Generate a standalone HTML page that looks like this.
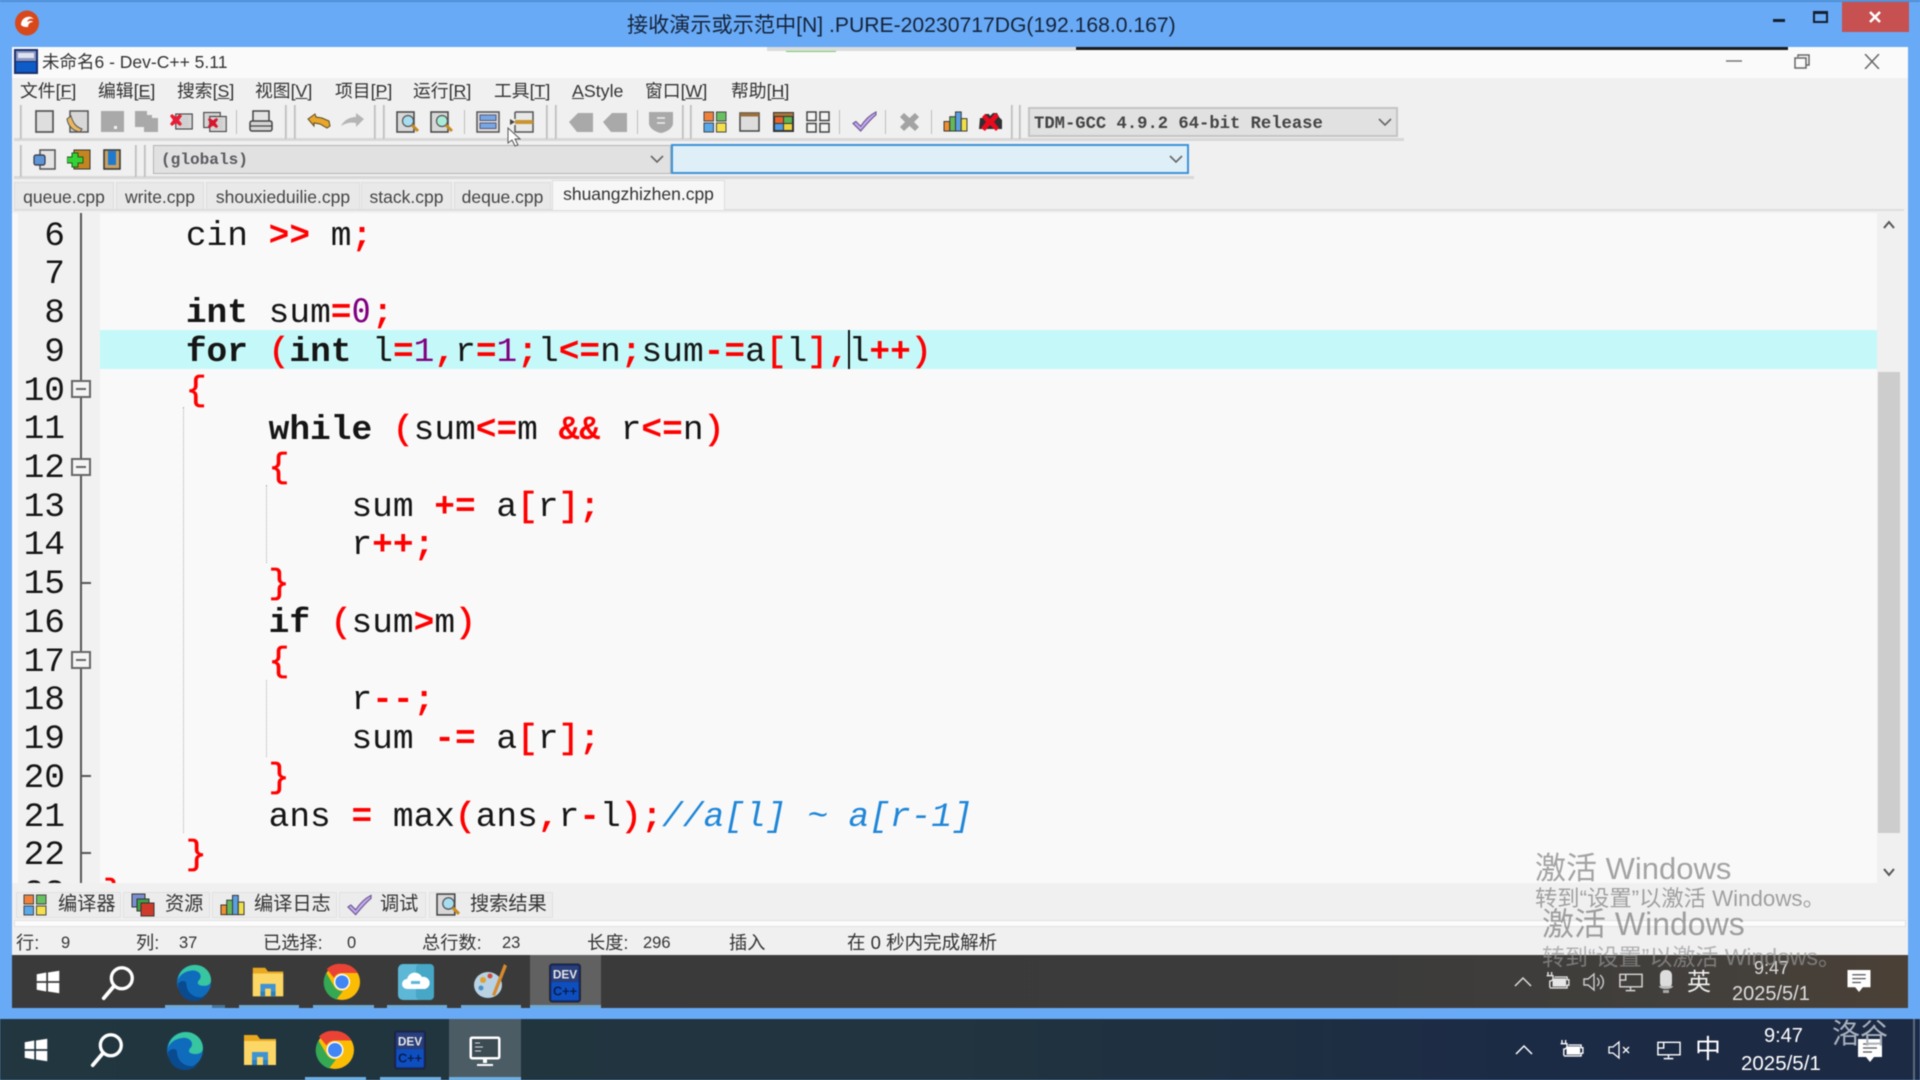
<!DOCTYPE html>
<html lang="zh"><head><meta charset="utf-8"><title>Dev-C++</title>
<style>
*{box-sizing:border-box}
html,body{margin:0;padding:0;background:#68aaf6}
#r{position:relative;width:1920px;height:1080px;overflow:hidden;background:#68aaf6;font-family:"Liberation Sans","Noto Sans CJK SC",sans-serif;color:#222;filter:blur(.45px)}
.a,#r>div,#r>svg,#r>span{position:absolute}
.t{white-space:pre;line-height:1}
.m{font-size:17.800px;top:83px;color:#333}
.sep{width:1px;background:#bdbdbd;top:110px;height:24px}
.h{width:2px;background:#d0d0d0;border-left:1px solid #b8b8b8;top:105px;height:34px}
.h2{top:145px;height:32px}
.tab{top:182px;height:28px;background:#e9e9e9;border:1px solid #ddd;font-size:17.500px;color:#444;text-align:center;line-height:29px;white-space:pre}
#ed{left:12px;top:213px;width:1892px;height:670px;overflow:hidden;background:#f9f9f9}
.l{position:absolute;left:91px;margin-top:3.7px;height:38.73px;font:34.5px/38.73px "Liberation Mono",monospace;color:#151515;white-space:pre}
.n{position:absolute;left:0;width:53px;margin-top:3.7px;text-align:right;height:38.73px;font:34.5px/38.73px "Liberation Mono",monospace;color:#151515}
.l b{font-weight:bold}
.l i{font-style:normal;color:#f00;font-weight:bold}
.l s{text-decoration:none;color:#f00;-webkit-text-stroke:.7px #f00}
.l u{text-decoration:none;color:#800080}
.l em{font-style:italic;color:#1f86d8}
.zero{font-family:"DejaVu Sans Mono",monospace;font-size:32px;line-height:20px;display:inline-block;width:20.7px}
.fb{position:absolute;left:59px;width:20px;height:18px;background:#f4f4f4;border:2px solid #666}
.fb:after{content:"";position:absolute;left:3px;right:3px;top:6px;height:2px;background:#666}
.ft{position:absolute;left:69px;width:10px;height:2px;background:#555}
.bt{top:892px;height:26px;background:#ececec;border:1px solid #e2e2e2;font-size:19.200px;line-height:24px;color:#333;white-space:pre}
.s{top:934px;font-size:16.5px;color:#333;line-height:18px;white-space:pre}
.c{font-size:18.200px}
.w{color:rgba(110,110,110,.62);white-space:pre;line-height:1}
</style></head><body>
<div id="r">
<svg width="0" height="0" style="left:0;top:0">
<defs>
<symbol id="edge" viewBox="0 0 40 40"><circle cx="20" cy="20" r="18" fill="#0f6cbd"/><path d="M3 20C3 8 13 2 21 2c10 0 17 8 17 16 0 3-2 6-7 6-4 0-7-1-7-3 0-3 3-3 3-7 0-4-5-7-10-6C9 9 3 14 3 20z" fill="#37c6a0"/><path d="M12 22c0 9 8 15 16 14 2 0 3-1 5-2-3 4-8 6-13 6C10 40 3 32 3 22c3-4 9-4 9 0z" fill="#0a4a8f"/></symbol>
<symbol id="chrome" viewBox="0 0 40 40"><circle cx="20" cy="20" r="19" fill="#fbbc04"/><path d="M20 1a19 19 0 0 1 16.500 9.500H20a9.500 9.500 0 0 0-8.500 5L4 6.500A19 19 0 0 1 20 1z" fill="#ea4335"/><path d="M3.500 10.500 12 25a9.500 9.500 0 0 0 9 4.500L14 38.500A19 19 0 0 1 3.500 10.500z" fill="#34a853"/><circle cx="20" cy="20" r="8.500" fill="#fff"/><circle cx="20" cy="20" r="7" fill="#4285f4"/></symbol>
<symbol id="folder" viewBox="0 0 40 40"><path d="M4 5h13l3 4h16v26H4z" fill="#eaa820"/><path d="M4 11h32v24H4z" fill="#fcd765"/><path d="M12 30v-8h16v8h-5v-3h-6v3z" fill="#3f93d4"/><path d="M12 35v-5h5v5zM23 35v-5h5v5z" fill="#2d7fc0"/></symbol>
<symbol id="win" viewBox="0 0 30 30"><path d="M2 6l11-2v10H2zM15 4l13-2v12H15zM2 16h11v10L2 24zM15 16h13v12l-13-2z" fill="#fff"/></symbol>
<symbol id="search" viewBox="0 0 40 40"><circle cx="24" cy="15" r="11" fill="none" stroke="#fff" stroke-width="3.500"/><path d="M16 23 5 36" stroke="#fff" stroke-width="4" stroke-linecap="round"/></symbol>
<symbol id="bat" viewBox="0 0 26 22"><path d="M2 0v4M6 0v4M0.500 4h7v3c0 2-2 3-3.500 3v7" fill="none" stroke="#fff" stroke-width="1.500"/><path d="M4 17.500h19v-3h2v-6h-2v-3H9" fill="none" stroke="#fff" stroke-width="1.500"/><rect x="7" y="7" width="15" height="9" fill="#fff"/></symbol>
<symbol id="net" viewBox="0 0 26 20"><path d="M8 2h17v13H2V2h6v6H2M13 15v3M8 19h10" fill="none" stroke="#fff" stroke-width="1.500"/></symbol>
<symbol id="act" viewBox="0 0 24 24"><path d="M0 0h24v18h-8l-4 5-4-5H0z" fill="#fff"/><path d="M5 5h14M5 9h14M5 13h9" stroke="#555" stroke-width="1.300"/></symbol>
<symbol id="grid" viewBox="0 0 24 22"><rect x="1" y="1" width="9.500" height="9" fill="#f0813c" stroke="#444"/><rect x="13.500" y="1" width="9.500" height="9" fill="#68c060" stroke="#444"/><rect x="1" y="12" width="9.500" height="9" fill="#58a8ec" stroke="#444"/><rect x="13.500" y="12" width="9.500" height="9" fill="#f3e04a" stroke="#444"/></symbol>
<symbol id="check" viewBox="0 0 26 22"><path d="M1 13l3-2 5 5C13 10 19 4 25 1l0 3C19 9 14 15 9 21z" fill="#c4a8ee" stroke="#6a5790" stroke-width="1.200"/></symbol>
<symbol id="bars" viewBox="0 0 26 22"><rect x="1" y="11" width="6" height="10" fill="#ef8f30" stroke="#333"/><rect x="7" y="6" width="6" height="15" fill="#64b85a" stroke="#333"/><rect x="13" y="1" width="6" height="20" fill="#5a9fe0" stroke="#333"/><rect x="19" y="8" width="6" height="13" fill="#efe04a" stroke="#333"/></symbol>
<symbol id="doc" viewBox="0 0 24 22"><rect x="1" y="1" width="22" height="20" fill="#d6d6d6" stroke="#444" stroke-width="1.500"/><path d="M6 5h4M13 5h5M6 8h12M6 11h12M6 14h12M6 17h12" stroke="#aaa" stroke-width=".8" stroke-dasharray="1.500 1"/></symbol>
<symbol id="find" viewBox="0 0 24 22"><rect x="1" y="1" width="17" height="20" fill="#d8d8d8" stroke="#444" stroke-width="1.500"/><circle cx="12" cy="10" r="5.500" fill="#a8dcf0" stroke="#555" stroke-width="1.200"/><path d="M16 14l6 6" stroke="#c88a20" stroke-width="3"/></symbol>
<symbol id="find2" viewBox="0 0 24 22"><rect x="1" y="1" width="17" height="20" fill="#d8d8d8" stroke="#444" stroke-width="1.500"/><circle cx="12" cy="10" r="5.500" fill="#a8ecd8" stroke="#555" stroke-width="1.200"/><path d="M16 14l6 6" stroke="#c88a20" stroke-width="3"/></symbol>
<symbol id="dev" viewBox="0 0 36 44"><rect x="1" y="1" width="34" height="42" rx="3" fill="#12296e" stroke="#222"/><rect x="3" y="3" width="30" height="18" fill="#2a3e78"/><rect x="3" y="21" width="30" height="20" fill="#0e4fc0"/><text x="18" y="17" font-family="Liberation Sans" font-weight="bold" font-size="13" fill="#e8e8e8" text-anchor="middle">DEV</text><text x="18" y="36" font-family="Liberation Sans" font-weight="bold" font-size="14" fill="#0b1e50" text-anchor="middle">C++</text></symbol>
</defs></svg>

<!-- outer frame -->
<div style="left:0;top:0;width:1920px;height:2px;background:#4f8fd6"></div>
<svg style="left:13px;top:10px" width="28" height="26" viewBox="0 0 28 26"><ellipse cx="14" cy="13" rx="12" ry="12.500" fill="#d9481a"/><path d="M8 15c0-6 5-9 10-8l3 2c-4-1-6 0-7 3 3-2 6-1 6 0-3 0-5 2-5 5-3 0-5 0-7-2z" fill="#fff"/></svg>
<div class="t" style="left:627px;top:14px;font-size:21.150px;color:#15233a;line-height:24px">接收演示或示范中[N] .PURE-20230717DG(192.168.0.167)</div>
<div style="left:1773px;top:19px;width:12px;height:3px;background:#14202f"></div>
<div style="left:1813px;top:11px;width:15px;height:12px;border:2px solid #14202f;border-top-width:3px"></div>
<div style="left:1842px;top:2px;width:67px;height:30px;background:#c75050"></div>
<svg style="left:1868px;top:11px" width="14" height="12" viewBox="0 0 14 12"><path d="M2 1l10 10M12 1 2 11" stroke="#fff" stroke-width="2.600"/></svg>

<!-- client -->
<div style="left:12px;top:47px;width:1896px;height:908px;background:#f0f0f0"></div>
<div style="left:12px;top:47px;width:1896px;height:31px;background:#fafafa"></div>
<div style="left:767px;top:47px;width:309px;height:4px;background:#dcdcdc"></div>
<div style="left:786px;top:51px;width:50px;height:1px;background:#6fcf6f"></div>
<div style="left:1076px;top:47px;width:712px;height:3px;background:#1a1a1a"></div>
<svg style="left:14px;top:49px" width="24" height="25" viewBox="0 0 24 25"><rect width="24" height="25" fill="#1a2f6c"/><rect x="2" y="2" width="20" height="10" fill="#8a97c4"/><rect x="2" y="13" width="20" height="10" fill="#0e5cc8"/><rect x="4" y="4" width="16" height="5" fill="#dfe3ef"/></svg>
<div class="t" style="left:42px;top:52px;font-size:17.500px;line-height:20px;color:#333">未命名6 - Dev-C++ 5.11</div>
<svg style="left:1726px;top:55px" width="16" height="12"><path d="M0 6h16" stroke="#777" stroke-width="1.500"/></svg>
<svg style="left:1794px;top:54px" width="16" height="15" viewBox="0 0 16 15"><path d="M4 3V1h11v10h-3M1 4h11v10H1z" fill="none" stroke="#666" stroke-width="1.500"/></svg>
<svg style="left:1864px;top:54px" width="16" height="15" viewBox="0 0 16 15"><path d="M1 0l14 15M15 0 1 15" stroke="#666" stroke-width="1.500"/></svg>

<!-- menu -->
<span class="t m" style="left:20px">文件[<u>F</u>]</span>
<span class="t m" style="left:98px">编辑[<u>E</u>]</span>
<span class="t m" style="left:177px">搜索[<u>S</u>]</span>
<span class="t m" style="left:255px">视图[<u>V</u>]</span>
<span class="t m" style="left:335px">项目[<u>P</u>]</span>
<span class="t m" style="left:413px">运行[<u>R</u>]</span>
<span class="t m" style="left:494px">工具[<u>T</u>]</span>
<span class="t m" style="left:572px"><u>A</u>Style</span>
<span class="t m" style="left:645px">窗口[<u>W</u>]</span>
<span class="t m" style="left:731px">帮助[<u>H</u>]</span>

<!-- toolbars -->
<div style="left:14px;top:138px;width:1390px;height:3px;background:#d8d8d8"></div>
<div style="left:14px;top:176px;width:1180px;height:3px;background:#d8d8d8"></div>
<div class="h" style="left:20px"></div><div class="h" style="left:285px"></div><div class="h" style="left:294px"></div><div class="h" style="left:374px"></div><div class="h" style="left:383px"></div><div class="h" style="left:546px"></div><div class="h" style="left:555px"></div><div class="h" style="left:682px"></div><div class="h" style="left:690px"></div><div class="h" style="left:1011px"></div><div class="h" style="left:1019px"></div>
<div class="h h2" style="left:20px"></div><div class="h h2" style="left:135px"></div><div class="h h2" style="left:144px"></div>
<div class="sep" style="left:236px"></div><div class="sep" style="left:464px"></div><div class="sep" style="left:637px"></div><div class="sep" style="left:839px"></div><div class="sep" style="left:885px"></div><div class="sep" style="left:931px"></div>

<svg style="left:35px;top:110px" width="19" height="23" viewBox="0 0 19 23"><rect x="1" y="1" width="17" height="21" fill="#dedede" stroke="#555" stroke-width="1.700"/></svg>
<svg style="left:66px;top:110px" width="23" height="23" viewBox="0 0 23 23"><rect x="4" y="1" width="18" height="21" fill="#d8d8d8" stroke="#555" stroke-width="1.500"/><path d="M1 9c1 7 6 12 13 13l2-3C10 17 7 13 5 6z" fill="#e8b860" stroke="#555"/></svg>
<svg style="left:101px;top:111px" width="23" height="21" viewBox="0 0 23 21"><rect width="23" height="21" fill="#a9a9a9"/><rect x="13" y="15" width="3" height="3" fill="#f4f4f4"/></svg>
<svg style="left:135px;top:111px" width="23" height="21" viewBox="0 0 23 21"><path d="M0 0h12v4h5v3h6v14H9v-5H0z" fill="#a9a9a9"/></svg>
<svg style="left:175px;top:111px" width="18" height="21"><use href="#doc"/></svg>
<svg style="left:169px;top:113px" width="14" height="14" viewBox="0 0 14 14"><path d="M1 3l2-2 4 3 4-3 2 2-3 4 3 4-2 2-4-3-4 3-2-2 3-4z" fill="#ea1b35"/></svg>
<svg style="left:203px;top:111px" width="18" height="18"><use href="#doc"/></svg>
<svg style="left:209px;top:115px" width="18" height="18"><use href="#doc"/></svg>
<svg style="left:207px;top:117px" width="12" height="12" viewBox="0 0 14 14"><path d="M1 3l2-2 4 3 4-3 2 2-3 4 3 4-2 2-4-3-4 3-2-2 3-4z" fill="#d9152e"/></svg>
<svg style="left:249px;top:110px" width="24" height="23" viewBox="0 0 24 23"><rect x="4" y="1" width="16" height="11" fill="#e4e4e4" stroke="#444" stroke-width="1.500"/><rect x="1" y="11" width="22" height="10" rx="2" fill="#d4d4d4" stroke="#444" stroke-width="1.500"/><path d="M1 16h22" stroke="#444" stroke-width="1.300"/></svg>
<svg style="left:307px;top:113px" width="24" height="16" viewBox="0 0 24 16"><path d="M1 6 8 1l1 3 6 1 7 3 1 5-3 2-7-4-6-1v3z" fill="#e8a62c" stroke="#5a4a20" stroke-width="1"/></svg>
<svg style="left:341px;top:113px" width="24" height="15" viewBox="0 0 24 15"><path d="M23 6 15 0v4C9 4 3 7 0 13c5-3 9-4 15-3v4z" fill="#b5b5b5"/></svg>
<svg style="left:396px;top:111px" width="24" height="22"><use href="#find"/></svg>
<svg style="left:430px;top:111px" width="24" height="22"><use href="#find2"/></svg>
<svg style="left:476px;top:111px" width="24" height="22" viewBox="0 0 24 22"><rect x="1" y="1" width="22" height="20" fill="#ddd" stroke="#555" stroke-width="1.500"/><rect x="4" y="4" width="16" height="5.500" fill="#78a8e4" stroke="#557"/><rect x="4" y="12" width="16" height="5.500" fill="#78a8e4" stroke="#557"/></svg>
<svg style="left:510px;top:111px" width="24" height="22" viewBox="0 0 24 22"><path d="M5 1h18v20H5v-7M5 8V1" fill="#e8e8e8" stroke="#555" stroke-width="1.500"/><rect x="5" y="9" width="18" height="4" fill="#c89530"/><path d="M0 8l5 3-5 3z" fill="#444"/></svg>
<svg style="left:569px;top:111px" width="24" height="21" viewBox="0 0 24 21"><path d="M0 11 9 2h15v19H8z" fill="#a9a9a9"/></svg>
<svg style="left:603px;top:111px" width="24" height="21" viewBox="0 0 24 21"><path d="M0 11 9 2h15v19H8z" fill="#a9a9a9"/></svg>
<svg style="left:649px;top:111px" width="24" height="22" viewBox="0 0 24 22"><path d="M0 1h24v11c0 5-6 9-12 10C6 21 0 17 0 12z" fill="#a9a9a9"/><path d="M8 7h8M8 12h8" stroke="#eee" stroke-width="1.500"/></svg>
<svg style="left:703px;top:111px" width="24" height="22"><use href="#grid"/></svg>
<svg style="left:739px;top:112px" width="21" height="20" viewBox="0 0 21 20"><rect x="1" y="1" width="19" height="18" fill="#ddd" stroke="#444" stroke-width="1.500"/><rect x="1" y="1" width="19" height="3.500" fill="#9a6f3a"/></svg>
<svg style="left:773px;top:112px" width="21" height="20" viewBox="0 0 21 20"><rect x="0" y="0" width="21" height="20" fill="#333"/><rect x="1" y="1" width="19" height="3" fill="#a9743a"/><rect x="2" y="5" width="8" height="6" fill="#e9622b"/><rect x="11" y="5" width="8" height="6" fill="#5db350"/><rect x="2" y="12" width="8" height="6" fill="#4e9be3"/><rect x="11" y="12" width="8" height="6" fill="#edd23f"/></svg>
<svg style="left:806px;top:111px" width="24" height="22" viewBox="0 0 24 22"><g fill="#f4f4f4" stroke="#444" stroke-width="1.500"><rect x="1" y="1" width="9" height="8.500"/><rect x="14" y="1" width="9" height="8.500"/><rect x="1" y="12.500" width="9" height="8.500"/><rect x="14" y="12.500" width="9" height="8.500"/></g></svg>
<svg style="left:852px;top:111px" width="25" height="21"><use href="#check"/></svg>
<svg style="left:899px;top:112px" width="21" height="20" viewBox="0 0 21 20"><path d="M1 5l4-4 5.500 5L16 1l4 4-5 5 5 5-4 4-5.500-5L5 19l-4-4 5-5z" fill="#a3a3a3"/></svg>
<svg style="left:943px;top:111px" width="25" height="21"><use href="#bars"/></svg>
<svg style="left:978px;top:111px" width="25" height="21" viewBox="0 0 25 21"><path d="M2 7h5V3h4l1 2 3-3h4l2 4 3 3v9H1z" fill="#2f2f2f"/><path d="M4 6l3-3 5 5 5-6 4 3-5 6 5 6-3 3-6-6-5 6-4-3 5-6z" fill="#ec0a1e"/></svg>

<svg style="left:33px;top:149px" width="23" height="21" viewBox="0 0 23 21"><rect x="7" y="1" width="15" height="19" fill="#e4e4e4" stroke="#555" stroke-width="1.500"/><rect x="1" y="6" width="11" height="10" rx="2" fill="#5c95d8" stroke="#334" stroke-width="1.200"/></svg>
<svg style="left:67px;top:149px" width="24" height="21" viewBox="0 0 24 21"><rect x="7" y="1" width="16" height="19" fill="#c4851e" stroke="#333"/><path d="M5 4h6v4h5v6h-5v4H5v-4H0V8h5z" fill="#35d235" stroke="#1d5a1d"/></svg>
<svg style="left:103px;top:149px" width="18" height="21" viewBox="0 0 18 21"><rect x="1" y="1" width="16" height="19" fill="#c9a162" stroke="#333" stroke-width="1.500"/><rect x="5" y="2" width="8" height="14" fill="#1e7ad0"/></svg>

<!-- combos -->
<div style="left:153px;top:145px;width:518px;height:29px;background:#e1e1e1;border:1px solid #b5b5b5"></div>
<div class="t" style="left:161px;top:152px;font:16.100px/17px 'Liberation Mono',monospace;color:#5a5a60;font-weight:bold">(globals)</div>
<svg style="left:650px;top:154px" width="14" height="10"><path d="M1 2l6 6 6-6" fill="none" stroke="#666" stroke-width="1.600"/></svg>
<div style="left:671px;top:144px;width:518px;height:30px;background:#deeff8;border:2px solid #3d92d8"></div>
<svg style="left:1169px;top:154px" width="14" height="10"><path d="M1 2l6 6 6-6" fill="none" stroke="#666" stroke-width="1.600"/></svg>
<div style="left:1028px;top:107px;width:370px;height:30px;background:#e1e1e1;border:2px solid #c4c4c4"></div>
<div class="t" style="left:1034px;top:116px;font:17.200px/18px 'Liberation Mono',monospace;color:#444;font-weight:bold">TDM-GCC 4.9.2 64-bit Release</div>
<svg style="left:1378px;top:117px" width="14" height="10"><path d="M1 2l6 6 6-6" fill="none" stroke="#666" stroke-width="1.600"/></svg>

<!-- tabs -->
<div style="left:14px;top:209px;width:1890px;height:2px;background:#dedede"></div>
<div class="tab" style="left:14px;width:100px">queue.cpp</div>
<div class="tab" style="left:116px;width:88px">write.cpp</div>
<div class="tab" style="left:206px;width:154px">shouxieduilie.cpp</div>
<div class="tab" style="left:361px;width:91px">stack.cpp</div>
<div class="tab" style="left:454px;width:97px">deque.cpp</div>
<div class="tab" style="left:552px;width:173px;top:180px;height:31px;background:#f7f7f7;line-height:26px;color:#333">shuangzhizhen.cpp</div>

<!-- editor -->
<div id="ed">
<div style="position:absolute;left:6px;top:0;width:82px;height:670px;background:#f1f1f1"></div>
<div style="position:absolute;left:1865px;top:0;width:27px;height:670px;background:#f0f0f0"></div>
<div style="position:absolute;left:1866px;top:159px;width:22px;height:461px;background:#cdcdcd"></div>
<svg style="position:absolute;left:1871px;top:7px" width="12" height="10"><path d="M1 8l5-6 5 6" fill="none" stroke="#555" stroke-width="2"/></svg>
<svg style="position:absolute;left:1871px;top:654px" width="12" height="10"><path d="M1 2l5 6 5-6" fill="none" stroke="#555" stroke-width="2"/></svg>
<div style="position:absolute;left:68px;top:0;width:2px;height:670px;background:#555"></div>
<div style="position:absolute;left:88px;top:117px;width:1777px;height:39px;background:#c5f9f9"></div>
<div style="position:absolute;left:171px;top:194px;height:426px;border-left:1px dotted #aaa"></div>
<div style="position:absolute;left:254px;top:272px;height:78px;border-left:1px dotted #aaa"></div>
<div style="position:absolute;left:254px;top:467px;height:77px;border-left:1px dotted #aaa"></div>
<div class="fb" style="top:167px"></div><div class="fb" style="top:245px"></div><div class="fb" style="top:438px"></div>
<div class="ft" style="top:369px"></div><div class="ft" style="top:562px"></div><div class="ft" style="top:639px"></div>

<div class="n" style="top:1px">6</div><div class="l" style="top:1px">    cin <i>&gt;&gt;</i> m<i>;</i></div>
<div class="n" style="top:39.700px">7</div>
<div class="n" style="top:78.500px">8</div><div class="l" style="top:78.500px">    <b>int</b> sum<i>=</i><u class="zero">0</u><i>;</i></div>
<div class="n" style="top:117.200px">9</div><div class="l" style="top:117.200px">    <b>for</b> <s>(</s><b>int</b> l<i>=</i><u>1</u><i>,</i>r<i>=</i><u>1</u><i>;</i>l<i>&lt;=</i>n<i>;</i>sum<i>-=</i>a<s>[</s>l<s>]</s><i>,</i>l<i>++</i><s>)</s></div>
<div style="position:absolute;left:836px;top:117px;width:2px;height:39px;background:#111"></div>
<div class="n" style="top:155.900px">10</div><div class="l" style="top:155.900px">    <s>{</s></div>
<div class="n" style="top:194.700px">11</div><div class="l" style="top:195.500px">        <b>while</b> <s>(</s>sum<i>&lt;=</i>m <i>&amp;&amp;</i> r<i>&lt;=</i>n<s>)</s></div>
<div class="n" style="top:233.400px">12</div><div class="l" style="top:233.400px">        <s>{</s></div>
<div class="n" style="top:272.100px">13</div><div class="l" style="top:272.100px">            sum <i>+=</i> a<s>[</s>r<s>]</s><i>;</i></div>
<div class="n" style="top:310.800px">14</div><div class="l" style="top:310.800px">            r<i>++;</i></div>
<div class="n" style="top:349.600px">15</div><div class="l" style="top:349.600px">        <s>}</s></div>
<div class="n" style="top:388.300px">16</div><div class="l" style="top:388.300px">        <b>if</b> <s>(</s>sum<i>&gt;</i>m<s>)</s></div>
<div class="n" style="top:427px">17</div><div class="l" style="top:427px">        <s>{</s></div>
<div class="n" style="top:465.800px">18</div><div class="l" style="top:465.800px">            r<i>--;</i></div>
<div class="n" style="top:504.500px">19</div><div class="l" style="top:504.500px">            sum <i>-=</i> a<s>[</s>r<s>]</s><i>;</i></div>
<div class="n" style="top:543.200px">20</div><div class="l" style="top:543.200px">        <s>}</s></div>
<div class="n" style="top:582px">21</div><div class="l" style="top:582px">        ans <i>=</i> max<s>(</s>ans<i>,</i>r<i>-</i>l<s>)</s><i>;</i><em>//a[l] ~ a[r-1]</em></div>
<div class="n" style="top:620.700px">22</div><div class="l" style="top:620.700px">    <s>}</s></div>
<div class="n" style="top:659.400px">23</div><div class="l" style="top:659.400px"><s>}</s></div>
</div>

<!-- bottom tabs -->
<div class="bt" style="left:16px;width:105px;padding-left:41px">编译器</div>
<div class="bt" style="left:123px;width:87px;padding-left:41px">资源</div>
<div class="bt" style="left:212px;width:125px;padding-left:41px">编译日志</div>
<div class="bt" style="left:339px;width:87px;padding-left:40px">调试</div>
<div class="bt" style="left:429px;width:124px;padding-left:40px">搜索结果</div>
<svg style="left:23px;top:894px" width="24" height="22"><use href="#grid"/></svg>
<svg style="left:131px;top:893px" width="24" height="24" viewBox="0 0 24 24"><rect x="1" y="1" width="13" height="13" fill="#7a8fd0" stroke="#333"/><rect x="6" y="6" width="12" height="12" fill="#3fa04a" stroke="#333"/><rect x="10" y="10" width="13" height="13" fill="#d03a2a" stroke="#333"/></svg>
<svg style="left:220px;top:894px" width="25" height="22"><use href="#bars"/></svg>
<svg style="left:347px;top:894px" width="25" height="22"><use href="#check"/></svg>
<svg style="left:436px;top:893px" width="25" height="23"><use href="#find"/></svg>
<div style="left:14px;top:920px;width:1892px;height:7px;background:#fcfcfc;border:1px solid #e2e2e2"></div>

<!-- status -->
<span class="s c" style="left:16px">行:</span><span class="s" style="left:61px">9</span>
<span class="s c" style="left:136px">列:</span><span class="s" style="left:179px">37</span>
<span class="s c" style="left:263px">已选择:</span><span class="s" style="left:347px">0</span>
<span class="s c" style="left:422px">总行数:</span><span class="s" style="left:502px">23</span>
<span class="s c" style="left:587px">长度:</span><span class="s" style="left:643px">296</span>
<span class="s c" style="left:729px">插入</span>
<span class="s c" style="left:847px;font-size:18.500px">在 0 秒内完成解析</span>

<!-- inner taskbar -->
<div style="left:12px;top:955px;width:1896px;height:53px;background:linear-gradient(90deg,#3a3a3a,#3b3b3b 70%,#43403c 90%,#4b4036)"></div>
<div style="left:530px;top:955px;width:71px;height:53px;background:#616161"></div>
<div style="left:165px;top:1005px;width:47px;height:3px;background:#6fa9d6"></div><div style="left:212px;top:1005px;width:13px;height:3px;background:#4b7595"></div>
<div style="left:239px;top:1005px;width:60px;height:3px;background:#6fa9d6"></div><div style="left:313px;top:1005px;width:61px;height:3px;background:#6fa9d6"></div><div style="left:387px;top:1005px;width:60px;height:3px;background:#6fa9d6"></div><div style="left:461px;top:1005px;width:60px;height:3px;background:#6fa9d6"></div><div style="left:530px;top:1005px;width:71px;height:3px;background:#6fa9d6"></div>
<svg style="left:35px;top:969px" width="26" height="26"><use href="#win"/></svg>
<svg style="left:99px;top:964px" width="38" height="38"><use href="#search"/></svg>
<svg style="left:175px;top:963px" width="38" height="38"><use href="#edge"/></svg>
<svg style="left:249px;top:963px" width="38" height="38"><use href="#folder"/></svg>
<svg style="left:323px;top:963px" width="38" height="38"><use href="#chrome"/></svg>
<svg style="left:398px;top:964px" width="36" height="36" viewBox="0 0 36 36"><rect width="36" height="36" rx="5" fill="#5cb8d6"/><rect x="18" width="18" height="36" rx="4" fill="#46a7c6"/><path d="M9 25a5 5 0 0 1 0-10 8 8 0 0 1 15-2 6 6 0 0 1 3 12z" fill="#fff"/><rect x="13" y="17" width="9" height="3" fill="#5cb8d6"/></svg>
<svg style="left:473px;top:962px" width="36" height="40" viewBox="0 0 36 40"><ellipse cx="15" cy="23" rx="14" ry="13" fill="#b9d2e4"/><circle cx="10" cy="18" r="3" fill="#e0a030"/><circle cx="17" cy="14" r="2.500" fill="#d04a3a"/><circle cx="8" cy="26" r="2.500" fill="#4a90c8"/><path d="M31 2l3 2-12 30-3-1z" fill="#d68a2c"/></svg>
<svg style="left:547px;top:963px" width="36" height="40"><use href="#dev"/></svg>

<!-- inner tray -->
<svg style="left:1514px;top:976px" width="18" height="11"><path d="M1 10 9 2l8 8" fill="none" stroke="#ddd" stroke-width="1.500"/></svg>
<svg style="left:1546px;top:972px" width="24" height="20" opacity=".88"><use href="#bat"/></svg>
<svg style="left:1583px;top:972px" width="23" height="20" viewBox="0 0 23 20"><path d="M1 7h4l6-5v16l-6-5H1zM14 6a5 5 0 0 1 0 8M17 3a9 9 0 0 1 0 14" fill="none" stroke="#ccc" stroke-width="1.400"/></svg>
<svg style="left:1618px;top:972px" width="25" height="20" opacity=".8"><use href="#net"/></svg>
<svg style="left:1658px;top:970px" width="16" height="24" viewBox="0 0 16 24"><rect x="2" y="0" width="12" height="18" rx="5" fill="#ddd"/><path d="M1 16c0 4 14 4 14 0" fill="#bbb"/><rect x="5" y="20" width="6" height="3" fill="#aaa"/></svg>
<div class="t" style="left:1687px;top:971px;font-size:24px;color:#eee">英</div>
<div class="t" style="left:1754px;top:959px;font-size:18px;color:#ddd">9:47</div>
<div class="t" style="left:1732px;top:984px;font-size:20px;color:#ddd">2025/5/1</div>
<svg style="left:1847px;top:970px" width="24" height="23"><use href="#act"/></svg>

<!-- outer taskbar -->
<div style="left:0;top:1019px;width:1920px;height:61px;background:linear-gradient(90deg,#21363f,#21343f 50%,#1c2b45 80%,#1d2a44)"></div>
<div style="left:449px;top:1019px;width:72px;height:61px;background:#4b5c65"></div>
<div style="left:305px;top:1077px;width:61px;height:3px;background:#6fb0e0"></div><div style="left:380px;top:1077px;width:61px;height:3px;background:#6fb0e0"></div><div style="left:449px;top:1077px;width:72px;height:3px;background:#6fb0e0"></div>
<svg style="left:23px;top:1037px" width="26" height="26"><use href="#win"/></svg>
<svg style="left:88px;top:1031px" width="38" height="38"><use href="#search"/></svg>
<svg style="left:165px;top:1030px" width="40" height="40"><use href="#edge"/></svg>
<svg style="left:240px;top:1030px" width="40" height="40"><use href="#folder"/></svg>
<svg style="left:315px;top:1030px" width="40" height="40"><use href="#chrome"/></svg>
<svg style="left:391px;top:1030px" width="38" height="40"><use href="#dev"/></svg>
<svg style="left:468px;top:1035px" width="34" height="34" viewBox="0 0 34 34"><rect x="2" y="2" width="30" height="22" rx="2" fill="#fff" stroke="#fff"/><rect x="4" y="4" width="26" height="18" fill="#3c4a52"/><path d="M7 8h5M7 12h8M7 16h6" stroke="#ddd"/><path d="M15 24h4v4h-4zM9 29h16v2H9z" fill="#fff"/></svg>
<div style="left:1913px;top:1019px;width:2px;height:61px;background:#5a6a7d"></div>

<svg style="left:1515px;top:1044px" width="18" height="11"><path d="M1 10 9 2l8 8" fill="none" stroke="#fff" stroke-width="1.500"/></svg>
<svg style="left:1560px;top:1040px" width="24" height="20"><use href="#bat"/></svg>
<svg style="left:1608px;top:1040px" width="23" height="20" viewBox="0 0 23 20"><path d="M1 7h4l6-5v16l-6-5H1zM15 7l6 6M21 7l-6 6" fill="none" stroke="#fff" stroke-width="1.300"/></svg>
<svg style="left:1656px;top:1040px" width="25" height="20"><use href="#net"/></svg>
<div class="t" style="left:1695px;top:1036px;font-size:26px;color:#fff">中</div>
<div class="t" style="left:1764px;top:1026px;font-size:20px;color:#fff">9:47</div>
<div class="t" style="left:1741px;top:1054px;font-size:20.500px;color:#fff">2025/5/1</div>
<svg style="left:1858px;top:1039px" width="24" height="24"><use href="#act"/></svg>
<div class="t" style="left:1832px;top:1020px;font-size:28px;color:#a9b1bd">洛谷</div>

<!-- watermarks -->
<div class="w" style="left:1535px;top:853px;font-size:31px">激活 Windows</div>
<div class="w" style="left:1535px;top:888px;font-size:22.300px">转到“设置”以激活 Windows。</div>
<div class="w" style="left:1542px;top:908px;font-size:32px;color:rgba(90,90,90,.55)">激活 Windows</div>
<div class="w" style="left:1542px;top:946px;font-size:23px;color:rgba(150,150,150,.7)">转到“设置”以激活 Windows。</div>

<!-- cursor -->
<svg style="left:507px;top:127px" width="14" height="20" viewBox="0 0 14 20"><path d="M1 1v15l4-3 3 6 3-1-3-6h5z" fill="#fff" stroke="#555"/></svg>
</div>
</body></html>
